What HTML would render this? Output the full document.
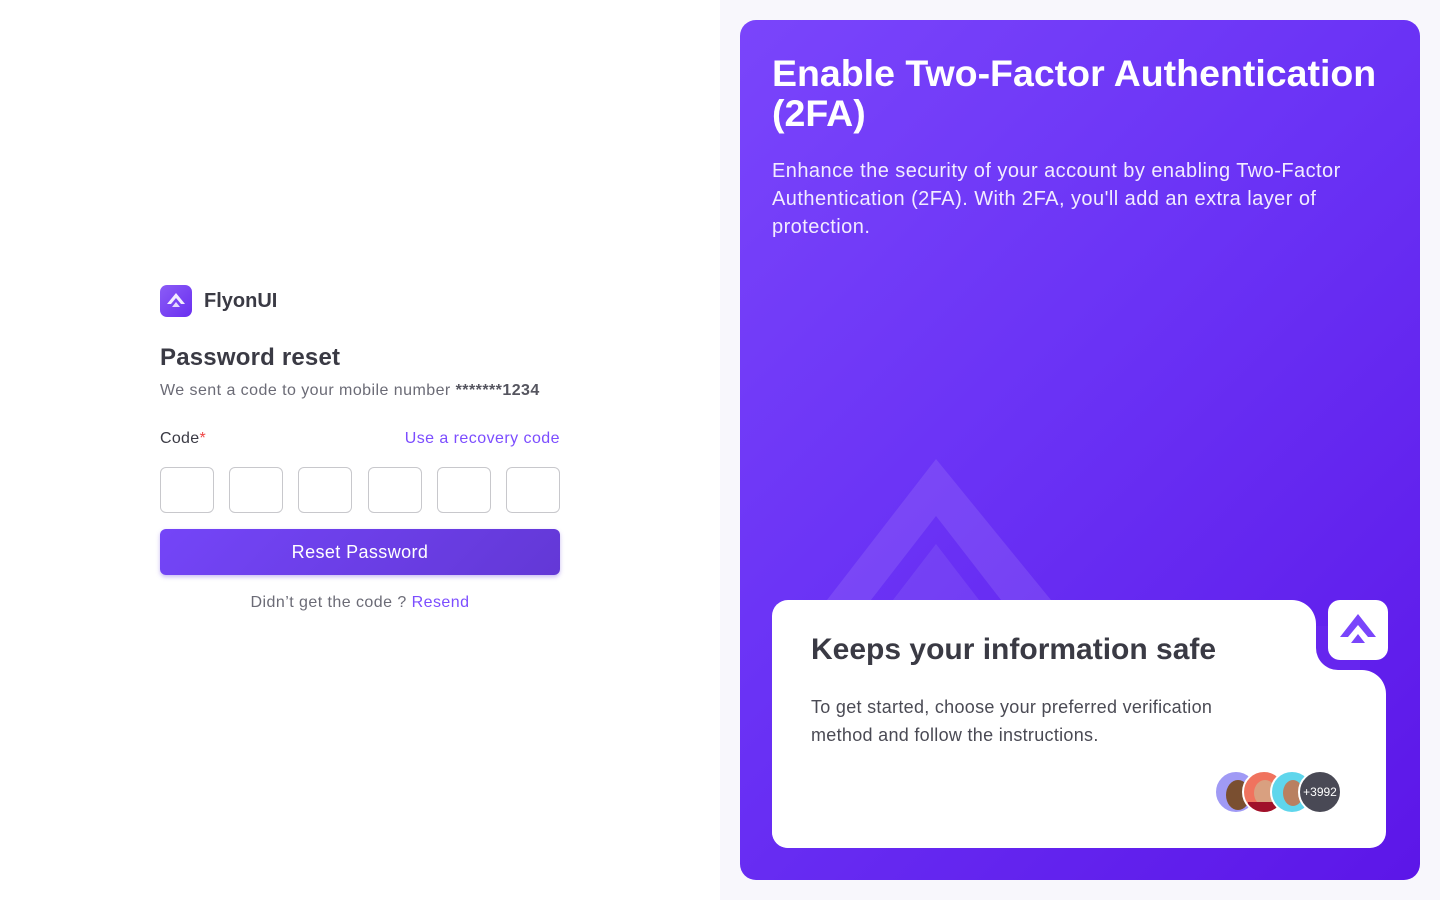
<!DOCTYPE html>
<html><head><meta charset="utf-8"><style>
*{margin:0;padding:0;box-sizing:border-box}
body{width:1440px;height:900px;font-family:"Liberation Sans",sans-serif;background:#fff;position:relative;overflow:hidden}
.right{position:absolute;left:720px;top:0;width:720px;height:900px;background:#f8f7fc}
.panel{position:absolute;left:740px;top:20px;width:680px;height:860px;border-radius:16px;background:linear-gradient(135deg,#7a45fb 0%,#6a32f5 45%,#5c16e8 100%);overflow:hidden}
.abs{position:absolute}
.box{position:absolute;top:467px;width:54px;height:46px;border:1px solid #c8c8cc;border-radius:6px}
</style></head><body>
<div class="abs" style="left:160px;top:285px;width:32px;height:32px;border-radius:7px;background:linear-gradient(135deg,#8b5cf6,#6a2ff0)">
<svg width="32" height="32" viewBox="0 0 32 32"><path d="M16 8 L25 19 L21 19 L16 13 L11 19 L7 19 Z" fill="#fff" opacity=".9"/><path d="M16 17 L20 22 L12 22 Z" fill="#fff" opacity=".8"/></svg></div>
<div class="abs" style="left:204px;top:290px;font-size:20px;font-weight:bold;color:#3a3a44">FlyonUI</div>
<div class="abs" style="left:160px;top:344px;font-size:24px;font-weight:bold;color:#3a3a44;letter-spacing:.2px">Password reset</div>
<div class="abs" style="left:160px;top:382px;font-size:16px;color:#6b6b76;letter-spacing:.45px">We sent a code to your mobile number <b style="color:#55555f">*******1234</b></div>
<div class="abs" style="left:160px;top:430px;font-size:16px;color:#3a3a44;letter-spacing:.3px">Code<span style="color:#ef4444">*</span></div>
<div class="abs" style="right:880px;top:430px;font-size:16px;color:#7c4dff;letter-spacing:.45px">Use a recovery code</div>
<div class="box" style="left:160px"></div><div class="box" style="left:229px"></div><div class="box" style="left:298px"></div><div class="box" style="left:368px"></div><div class="box" style="left:437px"></div><div class="box" style="left:506px"></div>
<div class="abs" style="left:160px;top:529px;width:400px;height:46px;border-radius:6px;background:linear-gradient(135deg,#7445f8,#6338d6);box-shadow:0 2px 4px rgba(100,60,220,.35);color:#fff;font-size:18px;text-align:center;line-height:47px;letter-spacing:.4px">Reset Password</div>
<div class="abs" style="left:0;width:720px;top:594px;text-align:center;font-size:16px;color:#6b6b76;letter-spacing:.45px">Didn’t get the code ? <span style="color:#7c4dff">Resend</span></div>
<div class="right"></div>
<div class="panel">
<svg class="abs" style="left:0;top:0" width="680" height="860"><path d="M196 439 L311 580 L261 580 L196 496 L131 580 L87 580 Z" fill="#fff" opacity=".1"/><path d="M196 524 L239 580 L153 580 Z" fill="#fff" opacity=".08"/></svg>
<div class="abs" style="left:32px;top:33px;width:640px;font-size:37.5px;line-height:40px;font-weight:bold;color:#fff">Enable Two-Factor Authentication (2FA)</div>
<div class="abs" style="left:32px;top:137px;width:620px;font-size:20px;line-height:28px;color:#f2ecff;letter-spacing:.45px">Enhance the security of your account by enabling Two-Factor Authentication (2FA). With 2FA, you'll add an extra layer of protection.</div>
<div class="abs" style="left:32px;top:580px;width:544px;height:248px;background:#fff;border-radius:16px 24px 16px 16px"></div>
<div class="abs" style="left:32px;top:650px;width:614px;height:178px;background:#fff;border-radius:0 24px 16px 16px"></div>
<div class="abs" style="left:576px;top:628px;width:22px;height:22px;background:#fff"></div>
<div class="abs" style="left:576px;top:606px;width:44px;height:44px;background:#6626ee;border-radius:0 0 0 22px"></div>
<div class="abs" style="left:588px;top:580px;width:60px;height:60px;background:#fff;border-radius:12px">
<svg width="60" height="60" viewBox="0 0 60 60"><path d="M30 14 L48 37 L40 37 L30 25 L20 37 L12 37 Z" fill="#7a45fb"/><path d="M30 34 L37 43 L23 43 Z" fill="#7a45fb"/></svg></div>
<div class="abs" style="left:71px;top:613px;font-size:30px;font-weight:bold;color:#3a3a44">Keeps your information safe</div>
<div class="abs" style="left:71px;top:673px;width:440px;font-size:18px;line-height:28px;color:#4a4a54;letter-spacing:.3px">To get started, choose your preferred verification method and follow the instructions.</div>
<div class="abs" style="left:474px;top:750px;width:44px;height:44px;border-radius:50%;background:#a09af5;border:2px solid #fff"><div style="margin:8px 0 0 10px;width:24px;height:30px;border-radius:50%;background:#7a4f30"></div></div>
<div class="abs" style="left:502px;top:750px;width:44px;height:44px;border-radius:50%;background:#f0735e;border:2px solid #fff;overflow:hidden"><div style="margin:8px 0 0 10px;width:22px;height:26px;border-radius:50%;background:#d9a080"></div><div style="margin:-4px 0 0 4px;width:36px;height:14px;background:#a0102a"></div></div>
<div class="abs" style="left:530px;top:750px;width:44px;height:44px;border-radius:50%;background:#5fd6ec;border:2px solid #fff;overflow:hidden"><div style="margin:8px 0 0 11px;width:20px;height:26px;border-radius:50%;background:#b98060"></div></div>
<div class="abs" style="left:558px;top:750px;width:44px;height:44px;border-radius:50%;background:#494955;border:2px solid #fff;color:#fff;font-size:12px;text-align:center;line-height:40px">+3992</div>
</div>
</body></html>
